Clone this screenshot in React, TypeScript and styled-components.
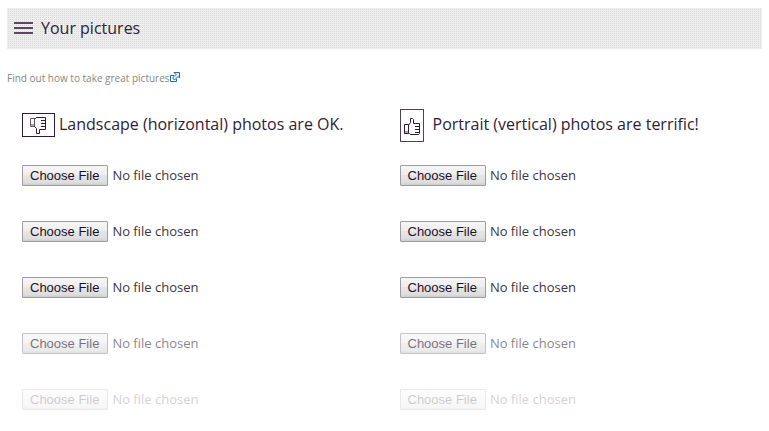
import React from "react";
import styled, { createGlobalStyle } from "styled-components";

const GlobalStyle = createGlobalStyle`
  * { box-sizing: border-box; }
  body {
    margin: 0;
    background: #fff;
    color: #2f1d36;
    font-family: "Open Sans", "Noto Sans", sans-serif;
  }
`;

const Page = styled.main`
  padding: 8px 7px 0;
`;

const TitleBar = styled.header`
  display: flex;
  align-items: center;
  gap: 8px;
  height: 41px;
  padding: 0 7px 2px;
  background-color: #eeeeee;
  background-image:
    repeating-linear-gradient(90deg, #eeeeee 0 1px, transparent 1px 2px),
    repeating-linear-gradient(0deg, #eeeeee 0 1px, #d8d8d8 1px 2px);
`;

const MenuButton = styled.button`
  display: flex;
  padding: 0;
  border: 0;
  background: none;
  cursor: pointer;
`;

const Title = styled.h1`
  margin: 0;
  font-size: 16px;
  line-height: 24px;
  font-weight: 400;
`;

const HelpLine = styled.p`
  margin: 20px 0 0;
  font-size: 10px;
  line-height: 18px;
`;

const HelpLink = styled.a`
  display: inline-flex;
  align-items: center;
  color: #85897c;
  text-decoration: none;

  svg { margin-bottom: 2px; }
`;

const Columns = styled.div`
  display: grid;
  grid-template-columns: 1fr 1fr;
  margin-top: 20px;
`;

const Column = styled.section`
  padding-left: 15px;
`;

const Heading = styled.h2<{ $gap: number }>`
  display: flex;
  align-items: center;
  gap: ${(p) => p.$gap}px;
  height: 36px;
  margin: 0;
  font-size: 16px;
  line-height: 24px;
  font-weight: 400;
  white-space: nowrap;

  svg { flex: none; }
`;

const HeadingText = styled.span`
  padding-bottom: 2px;
`;

const FileList = styled.div`
  display: grid;
  gap: 34px;
  margin-top: 21px;
`;

const FileInput = styled.input<{ $opacity: number }>`
  display: block;
  width: 100%;
  height: 22px;
  opacity: ${(p) => p.$opacity};
  color: #3d3540;
  font-family: inherit;
  font-size: 13px;
  line-height: 22px;

  &::file-selector-button {
    height: 21px;
    margin: 0 4px 0 0;
    padding: 0 8px 0 7px;
    border: 1px solid #a09ca2;
    border-radius: 1px;
    background: linear-gradient(#f5f5f5 0%, #eeeeee 45%, #e6e6e6 50%, #dddddd 88%, #cccccc 100%);
    color: #1d1026;
    font-family: "Liberation Sans", Arial, sans-serif;
    font-size: 13px;
    line-height: 19px;
  }
`;

const MenuIcon = () => (
  <svg width="19" height="12" viewBox="0 0 19 12" fill="#5c4660" aria-hidden="true">
    <path d="M0 0h19v2H0zM0 5h19v2H0zM0 10h19v2H0z" />
  </svg>
);

const ExternalIcon = () => (
  <svg width="11" height="11" viewBox="0 0 11 11" fill="none" stroke="#236ab0" aria-hidden="true">
    <path d="M4 3.5H.5v6h6V7" />
    <path d="M4 .5h5.5V6L8 4.5 4.5 8 2.5 6 6 2.5z" fill="#dcecf8" />
  </svg>
);

const ThumbDownIcon = () => (
  <svg width="33" height="24" viewBox="0 0 33 24" fill="none" stroke="#321a3a" aria-hidden="true">
    <rect x=".5" y=".5" width="32" height="23" />
    <path d="M12.5 5.5h-4v8h4z" stroke="#675569" />
    <path d="M9 11h3v2H9z" fill="#aaa2ac" stroke="none" />
    <path d="M12.5 5.5h1l1-1h9v12h-6v4h-3v-5l-2-2M19 7.5h4M19 10.5h4M19 13.5h4" />
  </svg>
);

const ThumbUpIcon = () => (
  <svg width="24" height="33" viewBox="0 0 24 33" fill="none" stroke="#321a3a" aria-hidden="true">
    <rect x=".5" y=".5" width="23" height="32" stroke="#54405a" />
    <path d="M8.5 15.5h-4v9h4z" />
    <path d="M5 22h3v2H5z" fill="#aaa2ac" stroke="none" />
    <path d="M8.5 16.5l2-3v-4h2l1 1v4h6v10l-1 1h-8l-1-1h-1M15 17.5h4M15 20.5h4M15 23.5h4" />
  </svg>
);

const rowOpacities = [1, 1, 1, 0.6, 0.22];

const groups = [
  { id: "landscape", title: "Landscape (horizontal) photos are OK.", gap: 4, Icon: ThumbDownIcon },
  { id: "portrait", title: "Portrait (vertical) photos are terrific!", gap: 9, Icon: ThumbUpIcon },
];

export default function App() {
  return (
    <>
      <GlobalStyle />
      <Page>
        <TitleBar>
          <MenuButton type="button" aria-label="Menu"><MenuIcon /></MenuButton>
          <Title>Your pictures</Title>
        </TitleBar>
        <HelpLine>
          <HelpLink href="#help">Find out how to take great pictures<ExternalIcon /></HelpLink>
        </HelpLine>
        <Columns>
          {groups.map(({ id, title, gap, Icon }) => (
            <Column key={id} aria-labelledby={id}>
              <Heading id={id} $gap={gap}><Icon /><HeadingText>{title}</HeadingText></Heading>
              <FileList>
                {rowOpacities.map((opacity, i) => (
                  <FileInput
                    key={i}
                    type="file"
                    accept="image/*"
                    aria-label={`${title} ${i + 1}`}
                    $opacity={opacity}
                  />
                ))}
              </FileList>
            </Column>
          ))}
        </Columns>
      </Page>
    </>
  );
}
